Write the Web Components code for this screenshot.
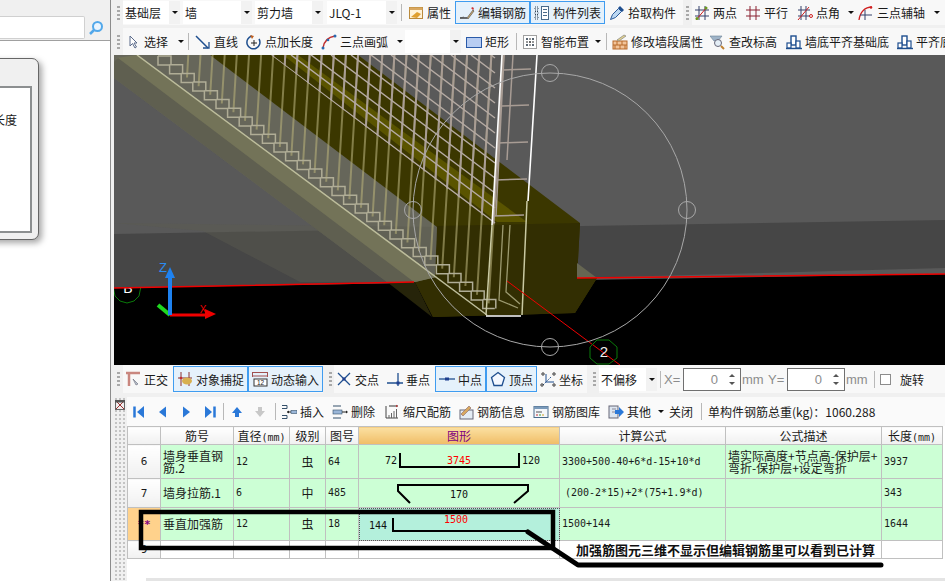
<!DOCTYPE html>
<html lang="zh">
<head>
<meta charset="utf-8">
<title>钢筋编辑</title>
<style>
  html, body { margin: 0; padding: 0; background: #f0f0f0; }
  body { width: 945px; height: 581px; overflow: hidden; font: 12px "Noto Sans CJK SC", "Liberation Sans", sans-serif; color: #1a1a1a; }
</style>
</head>
<body>
<cad-app>
  <side-panel slot="side"></side-panel>

  <tool-bar h="25" mb="3">
    <tool-grip w="9"></tool-grip>
    <tool-combo w="57" mr="3">基础层</tool-combo>
    <tool-combo w="69" mr="3">墙</tool-combo>
    <tool-combo w="68" mr="4">剪力墙</tool-combo>
    <tool-combo w="70">JLQ-1</tool-combo>
    <tool-sep w="9"></tool-sep>
    <tool-btn w="49" pl="2" icon="props">属性</tool-btn>
    <tool-btn w="75" pl="4" icon="editbar" active>编辑钢筋</tool-btn>
    <tool-btn w="75" pl="4" icon="list" active>构件列表</tool-btn>
    <tool-btn w="78" pl="4" icon="pick">拾取构件</tool-btn>
    <tool-grip w="9"></tool-grip>
    <tool-btn w="51" pl="2" icon="twopt">两点</tool-btn>
    <tool-btn w="52" pl="2" icon="parallel">平行</tool-btn>
    <tool-btn w="60" pl="2" icon="angle" arrow am="5">点角</tool-btn>
    <tool-btn w="90" pl="3" icon="arcaxis" arrow am="6">三点辅轴</tool-btn>
  </tool-bar>

  <tool-bar h="27">
    <tool-grip w="9"></tool-grip>
    <tool-btn w="61" pl="2" icon="cursor" arrow am="7">选择</tool-btn>
    <tool-sep w="8"></tool-sep>
    <tool-btn w="52" pl="3" icon="line">直线</tool-btn>
    <tool-btn w="75" pl="2" icon="addlen">点加长度</tool-btn>
    <tool-btn w="85" pl="2" icon="arc" arrow am="6">三点画弧</tool-btn>
    <tool-combo w="56" ml="1"></tool-combo>
    <tool-btn w="51" pl="5" icon="rect">矩形</tool-btn>
    <tool-sep w="8"></tool-sep>
    <tool-btn w="82" pl="2" icon="smart" arrow am="3">智能布置</tool-btn>
    <tool-sep w="8"></tool-sep>
    <tool-btn w="97" pl="2" icon="wall">修改墙段属性</tool-btn>
    <tool-btn w="76" pl="3" icon="level">查改标高</tool-btn>
    <tool-btn w="111" pl="3" icon="align">墙底平齐基础底</tool-btn>
    <tool-btn w="60" pl="3" icon="align">平齐底部</tool-btn>
  </tool-bar>

  <scene-view></scene-view>

  <tool-bar h="28" mb="4">
    <tool-grip w="9"></tool-grip>
    <tool-btn w="50" pl="2" icon="ortho">正交</tool-btn>
    <tool-btn w="75" pl="4" icon="snap" active>对象捕捉</tool-btn>
    <tool-btn w="75" pl="4" icon="dyn" active>动态输入</tool-btn>
    <tool-grip w="11" pl="6"></tool-grip>
    <tool-btn w="51" pl="2" icon="cross">交点</tool-btn>
    <tool-btn w="50" pl="2" icon="perp">垂点</tool-btn>
    <tool-btn w="51" pl="4" icon="mid" active>中点</tool-btn>
    <tool-btn w="51" pl="4" icon="vertex" active>顶点</tool-btn>
    <tool-btn w="50" pl="3" icon="coord">坐标</tool-btn>
    <tool-grip w="12" pl="6"></tool-grip>
    <tool-combo w="58">不偏移</tool-combo>
    <tool-sep w="7"></tool-sep>
    <coord-field label="X=" value="0"></coord-field>
    <coord-field label="Y=" value="0"></coord-field>
    <tool-sep w="4"></tool-sep>
    <check-field>旋转</check-field>
  </tool-bar>

  <grid-panel>
    <tool-bar h="29" slot="bar" flat>
      <tool-btn w="24" pl="4" icon="first"></tool-btn>
      <tool-btn w="24" pl="3" icon="prev"></tool-btn>
      <tool-btn w="23" pl="3" icon="next"></tool-btn>
      <tool-btn w="21" pl="4" icon="last"></tool-btn>
      <tool-sep w="8"></tool-sep>
      <tool-btn w="21" pl="2" icon="up"></tool-btn>
      <tool-btn w="23" pl="4" icon="down"></tool-btn>
      <tool-sep w="8"></tool-sep>
      <tool-btn w="50" pl="2" icon="insert">插入</tool-btn>
      <tool-btn w="52" pl="3" icon="remove">删除</tool-btn>
      <tool-btn w="75" pl="3" icon="scale">缩尺配筋</tool-btn>
      <tool-btn w="75" pl="2" icon="info">钢筋信息</tool-btn>
      <tool-btn w="75" pl="2" icon="lib">钢筋图库</tool-btn>
      <tool-btn w="61" pl="2" icon="other" arrow am="4">其他</tool-btn>
      <tool-btn w="30" pl="2">关闭</tool-btn>
      <tool-sep w="8"></tool-sep>
      <tool-btn w="200" pl="3">单构件钢筋总重(kg)：1060.288</tool-btn>
    </tool-bar>
    <rebar-grid></rebar-grid>
  </grid-panel>

  <note-callout slot="over">加强筋图元三维不显示但编辑钢筋里可以看到已计算</note-callout>
</cad-app>

<script>
// 16x16 toolbar icons
const ICONS = {
  props: '<rect x="1.5" y="2.5" width="13" height="11" fill="#fff3d8" stroke="#b98a3c"/><rect x="1.5" y="2.5" width="13" height="2.5" fill="#d9a860"/><path d="M3 12l6-5 4 2-4 4z" fill="#e0a030"/>',
  editbar: '<path d="M1 13h7" stroke="#333" stroke-width="1.4"/><path d="M1 13l4-1M8 13l6-8 1 1-6 8z" fill="#d9b26a" stroke="#555" stroke-width=".7"/><path d="M12 3l2-1 1 2-1 1z" fill="#c33"/>',
  list: '<rect x="1" y="2" width="3" height="3" fill="none" stroke="#345" stroke-dasharray="1 1"/><rect x="1" y="6.5" width="3" height="3" fill="none" stroke="#345" stroke-dasharray="1 1"/><rect x="1" y="11" width="3" height="3" fill="none" stroke="#345" stroke-dasharray="1 1"/><rect x="7.5" y="1.5" width="7" height="13" fill="#fff" stroke="#4a6a8a"/><path d="M9 4.5h4M9 7.5h4M9 10.5h4" stroke="#4a6a8a"/>',
  pick: '<path d="M1.5 14.5l2-5 6-6 3 3-6 6z" fill="#bcd8f2" stroke="#2a5a9a"/><path d="M9 3l2-2 4 4-2 2z" fill="#1f4f8f"/>',
  twopt: '<path d="M1 5h14M1 11h14M5 1v14M11 1v14" stroke="#35406a"/><path d="M2 15L13 2" stroke="#d02020"/><circle cx="3" cy="13.500" r="1.500" fill="#6a9a20"/><circle cx="12" cy="3" r="1.500" fill="#6a9a20"/>',
  parallel: '<path d="M1 5h14M1 11h14M5 1v14M11 1v14" stroke="#8a2030"/>',
  angle: '<path d="M1 5h12M1 11h12M4 1v14M9 1v14" stroke="#35406a"/><path d="M1 15L12 2" stroke="#d02020"/><circle cx="14" cy="11" r="1.500" fill="none" stroke="#d02020"/>',
  arcaxis: '<path d="M1 15C2 7 7 2 14 2" fill="none" stroke="#d02020" stroke-width="1.300"/><path d="M2 10h12M7 5v10" stroke="#35406a"/><circle cx="13" cy="2.500" r="1.300" fill="#d02020"/>',
  cursor: '<path d="M5 2v10l2.500-2.500L10 14l1.500-1-2.500-4h3z" fill="#fff" stroke="#5a6a8a"/>',
  line: '<path d="M1 2l12 12" stroke="#1f4f8f" stroke-width="1.500"/><path d="M8 14h6V8" fill="none" stroke="#1f4f8f" stroke-width="1.300"/>',
  addlen: '<path d="M6 2a6.500 6.500 0 1 0 7 3" fill="none" stroke="#1f4f8f" stroke-width="1.500"/><path d="M4 1l4 1-2 3z" fill="#c06020"/><path d="M8 6v6M5 9h6" stroke="#222"/>',
  arc: '<path d="M2 14C3 7 7 3 14 2" fill="none" stroke="#c03030" stroke-width="1.500"/><circle cx="2" cy="14" r="1.500" fill="#2a6ab0"/><circle cx="7" cy="6" r="1.300" fill="#2a6ab0"/><circle cx="14" cy="2" r="1.500" fill="#2a6ab0"/>',
  rect: '<rect x=".5" y="3.500" width="15" height="10" fill="#b8cdf2" stroke="#2a5aa8"/>',
  smart: '<rect x="1.500" y="1.500" width="13" height="13" fill="#fff" stroke="#444" stroke-dasharray="1 1"/><path d="M8 4v8M4 8h8" stroke="#333" stroke-dasharray="2 1"/><circle cx="5" cy="5" r="1" fill="#234"/><circle cx="11" cy="11" r="1" fill="#234"/><circle cx="11" cy="5" r="1" fill="#234"/><circle cx="5" cy="11" r="1" fill="#234"/>',
  wall: '<rect x="1" y="7" width="14" height="8" fill="#f2c49a" stroke="#b86a2a"/><path d="M1 11h14M5 7v4M10 7v4M3 11v4M8 11v4M13 11v4" stroke="#b86a2a"/><path d="M5 6l7-5 2 1-7 5z" fill="#e0d090" stroke="#777" stroke-width=".6"/>',
  level: '<path d="M0 2h12l-4 5H4z" fill="#9fb4c8" stroke="#6a8095" stroke-width=".6"/><circle cx="8" cy="9" r="3.500" fill="#e4eef6" stroke="#667"/><path d="M11 12l3 3" stroke="#c08030" stroke-width="2"/>',
  align: '<rect x="5" y="2" width="5" height="9" fill="#fff" stroke="#1f4f8f" stroke-width="1.400"/><rect x="1" y="9" width="4" height="5" fill="#fff" stroke="#1f4f8f" stroke-width="1.200"/><rect x="10" y="7" width="4" height="7" fill="#fff" stroke="#1f4f8f" stroke-width="1.200"/><path d="M0 14.500h16" stroke="#1f4f8f" stroke-width="1.400"/>',
  ortho: '<path d="M1 2h14M4 2v13" stroke="#c9867e" stroke-width="2.500"/><path d="M8 8l5 5-2 1z" fill="#bcc6d0" stroke="#667" stroke-width=".6"/>',
  snap: '<path d="M4 1v14M12 1v14M1 7h14" stroke="#8a3030"/><ellipse cx="10" cy="10" rx="5" ry="3.500" fill="#d8b050"/><circle cx="4" cy="7" r="1.300" fill="#c03030"/>',
  dyn: '<path d="M.5 1.500h15M.5 5h15M.5 1v5M15.500 1v5" stroke="#a05050"/><rect x="2" y="8" width="13" height="7" fill="#fff" stroke="#333"/><text x="8.500" y="14" font-size="6.500" text-anchor="middle" fill="#222" font-family="Liberation Sans">12</text>',
  cross: '<path d="M2 2l12 12M14 2L2 14" stroke="#1f4f8f" stroke-width="1.300"/><rect x="6.500" y="6.500" width="3" height="3" fill="#1f3f8f"/>',
  perp: '<path d="M0 12h16M11 2v13" stroke="#1f4f8f" stroke-width="1.300"/><rect x="9.500" y="10.500" width="3" height="3" fill="#1f3f8f"/>',
  mid: '<path d="M0 8h16" stroke="#1f4f8f" stroke-width="1.300"/><rect x="6" y="6.500" width="4" height="3" fill="#1f3f8f"/>',
  vertex: '<path d="M8 1.500l6.500 5-2.500 8H4l-2.500-8z" fill="#f4f8ff" stroke="#1f4f8f" stroke-width="1.300"/>',
  coord: '<path d="M6 3v8h8" fill="none" stroke="#1f4f8f"/><path d="M3 14l8-8" stroke="#1f4f8f" stroke-dasharray="1.500 1"/><circle cx="3" cy="3" r="1.200" fill="none" stroke="#333"/><circle cx="14" cy="3" r="1.200" fill="none" stroke="#333"/><circle cx="2" cy="14" r="1.200" fill="none" stroke="#333"/><circle cx="14" cy="14" r="1.200" fill="none" stroke="#333"/>',
  first: '<path d="M3.500 2.500v11" stroke="#2a78d8" stroke-width="2.500"/><path d="M13 2v12L6 8z" fill="#2a78d8"/>',
  prev: '<path d="M12 2.500v11L5 8z" fill="#2a78d8"/>',
  next: '<path d="M5 2.500v11L12 8z" fill="#2a78d8"/>',
  last: '<path d="M12.500 2.500v11" stroke="#2a78d8" stroke-width="2.500"/><path d="M3 2v12l7-6z" fill="#2a78d8"/>',
  up: '<path d="M8 3l5 6h-3v4H6V9H3z" fill="#2a78d8"/>',
  down: '<path d="M8 13l5-6h-3V3H6v4H3z" fill="#c8c8c8"/>',
  insert: '<path d="M1 1.500h5M6 1.500v3M1 4.500h5M1 11.500h5M6 11.500v3M1 14.500h5" fill="none" stroke="#35506a"/><path d="M6 8h4" stroke="#222"/><path d="M6 8l2-1.500v3z" fill="#222"/><rect x="10" y="6.500" width="6" height="3" fill="#9ab6d8" stroke="#35506a" stroke-width=".6"/>',
  remove: '<path d="M1 2h8M1 14h8" stroke="#35506a"/><rect x="1" y="6" width="9" height="4" fill="#9ab6d8" stroke="#35506a" stroke-width=".6"/><path d="M10 8h5" stroke="#222"/><path d="M16 8l-2-1.500v3z" fill="#222"/>',
  scale: '<path d="M2 2v12M2 14h12" stroke="#444"/><path d="M5 11v3M7.500 9v5M10 7v7M12.500 5v9" stroke="#666"/><path d="M5 2h9" stroke="#333"/><path d="M14 2l-2-1.200v2.400z" fill="#c03030"/>',
  info: '<rect x="2" y="6" width="13" height="9" fill="#e4ecf4" stroke="#667"/><path d="M3 10l8-8 2 2-8 8z" fill="#d8a860" stroke="#866" stroke-width=".6"/>',
  lib: '<rect x="1" y="2.500" width="14" height="11" fill="#f4f6fa" stroke="#4a6a8a"/><rect x="1" y="2.500" width="14" height="2.500" fill="#7a9aba"/><path d="M3 8h6" stroke="#555"/><path d="M3 11h2" stroke="#c03030"/><path d="M6 11h2" stroke="#30a030"/><path d="M9 11h2" stroke="#d0a020"/>',
  other: '<rect x="1" y="2" width="9" height="12" fill="#dde6f0" stroke="#667"/><path d="M4 5h4M4 8h4" stroke="#889"/><path d="M7 6h4V3l5 5-5 5v-3H7z" fill="#2a78d8"/>'
};

class CadApp extends HTMLElement {
  constructor() {
    super();
    this.attachShadow({ mode: 'open' }).innerHTML = `
      <style>
        :host { display: flex; position: relative; width: 945px; height: 581px; overflow: hidden; }
        .main { flex: 1; min-width: 0; display: flex; flex-direction: column; padding-left: 3px; background: #f0f0f0; }
      </style>
      <slot name="side"></slot>
      <div class="main"><slot></slot></div>
      <slot name="over"></slot>`;
  }
}

class SidePanel extends HTMLElement {
  constructor() {
    super();
    this.attachShadow({ mode: 'open' }).innerHTML = `
      <style>
        :host { display: flex; flex-direction: column; width: 111px; height: 581px; box-sizing: border-box; border-right: 1px solid #8c8c8c; background: #fff; overflow: hidden; flex: none; }
        .top { height: 41px; flex: none; box-sizing: border-box; background: #f0f0f0; border-bottom: 1px solid #a0a0a0; padding-top: 16px; display: flex; }
        .search { width: 85px; height: 23px; background: #fff; border: 1px solid #d0d0d0; border-left: 0; border-radius: 0 2px 2px 0; box-sizing: border-box; }
        .go { width: 20px; height: 23px; display: flex; align-items: center; justify-content: center; margin-left: 1px; }
        .dlg { margin: 17px 0 0 -40px; width: 79px; height: 182px; box-sizing: border-box; background: #f0f0f0; border: 1px solid #666; border-radius: 7px; box-shadow: 3px 3px 6px rgba(0,0,0,.35); padding: 27px 6px 6px 4px; }
        .inner { height: 100%; box-sizing: border-box; background: #fff; border: 2px solid #8c8f90; padding: 24px 0 0 26px; white-space: nowrap; line-height: 16px; }
      </style>
      <div class="top">
        <div class="search"></div>
        <div class="go"><svg width="16" height="16" viewBox="0 0 16 16"><circle cx="9.500" cy="6.500" r="4.500" fill="#eaf5ff" stroke="#52a8ea" stroke-width="2"/><path d="M6 10l-4 4" stroke="#52a8ea" stroke-width="2.500"/></svg></div>
      </div>
      <div class="dlg"><div class="inner">长度</div></div>`;
  }
}

class ToolBar extends HTMLElement {
  constructor() {
    super();
    this.attachShadow({ mode: 'open' });
  }
  connectedCallback() {
    const flat = this.hasAttribute('flat');
    this.shadowRoot.innerHTML = `
      <style>
        :host { display: flex; align-items: stretch; flex: none; height: ${this.getAttribute('h')}px; margin-bottom: ${this.getAttribute('mb') || 0}px; background: ${flat ? '#fafafa' : '#f8f8f8'}; white-space: nowrap; overflow: hidden; }
      </style>
      <slot></slot>`;
  }
}

class ToolBtn extends HTMLElement {
  constructor() {
    super();
    this.attachShadow({ mode: 'open' });
  }
  connectedCallback() {
    const icon = this.getAttribute('icon');
    const svg = icon ? `<svg width="16" height="16" viewBox="0 0 16 16">${ICONS[icon]}</svg>` : '';
    const arrow = this.hasAttribute('arrow') ? `<i style="margin-left:${this.getAttribute('am') || 4}px"></i>` : '';
    this.shadowRoot.innerHTML = `
      <style>
        :host { display: flex; align-items: center; gap: 3px; flex: none; box-sizing: border-box; width: ${this.getAttribute('w')}px; padding-left: ${this.getAttribute('pl') || 0}px; overflow: visible; }
        :host([active]) { margin: 1px 0; background: #e5f1fb; outline: 1px solid #3f9cf0; outline-offset: -1px; }
        svg { flex: none; }
        i { width: 0; height: 0; border: 3px solid transparent; border-top: 3px solid #111; border-bottom: 0; flex: none; }
      </style>
      ${svg}<span><slot></slot></span>${arrow}`;
  }
}

class ToolGrip extends HTMLElement {
  constructor() {
    super();
    this.attachShadow({ mode: 'open' });
  }
  connectedCallback() {
    this.shadowRoot.innerHTML = `
      <style>
        :host { display: flex; align-items: center; flex: none; box-sizing: border-box; width: ${this.getAttribute('w')}px; padding-left: ${this.getAttribute('pl') || 3}px; background: #f0f0f0; }
        b { display: block; width: 3px; height: 16px; background: radial-gradient(circle, #a8a8a8 55%, transparent 60%) 0 0 / 3px 4px; }
      </style>
      <b></b>`;
  }
}

class ToolSep extends HTMLElement {
  constructor() {
    super();
    this.attachShadow({ mode: 'open' });
  }
  connectedCallback() {
    this.shadowRoot.innerHTML = `
      <style>
        :host { display: flex; align-items: center; justify-content: center; flex: none; width: ${this.getAttribute('w')}px; }
        b { display: block; width: 1px; height: 17px; background: #b8b8b8; }
      </style>
      <b></b>`;
  }
}

class ToolCombo extends HTMLElement {
  constructor() {
    super();
    this.attachShadow({ mode: 'open' });
  }
  connectedCallback() {
    const g = (n) => this.getAttribute(n) || 0;
    this.shadowRoot.innerHTML = `
      <style>
        :host { display: flex; align-items: center; flex: none; box-sizing: border-box; height: 23px; align-self: center; width: ${g('w')}px; margin: 0 ${g('mr')}px 0 ${g('ml')}px; background: #fff; padding-left: 2px; }
        span { flex: 1; overflow: hidden; white-space: nowrap; }
        em { width: 11px; height: 100%; background: #f2f2f2; display: flex; align-items: center; justify-content: center; flex: none; }
        i { width: 0; height: 0; border: 3px solid transparent; border-top: 3px solid #111; border-bottom: 0; }
      </style>
      <span><slot></slot></span><em><i></i></em>`;
  }
}

class CoordField extends HTMLElement {
  constructor() {
    super();
    this.attachShadow({ mode: 'open' });
  }
  connectedCallback() {
    this.shadowRoot.innerHTML = `
      <style>
        :host { display: flex; align-items: center; flex: none; font: 13px "Liberation Sans", sans-serif; color: #8c8c8c; }
        .l { width: 19px; }
        .box { width: 58px; height: 23px; box-sizing: border-box; border: 1px solid #707070; background: #fff; display: flex; align-items: center; justify-content: flex-end; }
        .v { font-size: 13px; margin-right: 5px; }
        .s { width: 17px; height: 100%; display: flex; flex-direction: column; align-items: center; justify-content: center; gap: 5px; }
        .s i { width: 0; height: 0; border: 3px solid transparent; }
        .s i:first-child { border-bottom: 3px solid #555; border-top: 0; }
        .s i:last-child { border-top: 3px solid #555; border-bottom: 0; }
        .u { width: 27px; padding-left: 1px; box-sizing: border-box; letter-spacing: -.2px; }
      </style>
      <span class="l">${this.getAttribute('label')}</span>
      <div class="box"><span class="v">${this.getAttribute('value')}</span><div class="s"><i></i><i></i></div></div>
      <span class="u">mm</span>`;
  }
}

class CheckField extends HTMLElement {
  constructor() {
    super();
    this.attachShadow({ mode: 'open' }).innerHTML = `
      <style>
        :host { display: flex; align-items: center; flex: none; padding-left: 4px; }
        b { width: 11px; height: 11px; border: 1px solid #8c8c8c; box-sizing: border-box; margin-right: 9px; background: #fff; }
      </style>
      <b></b><span><slot></slot></span>`;
  }
}

class SceneView extends HTMLElement {
  constructor() {
    super();
    this.attachShadow({ mode: 'open' });
  }
  connectedCallback() {
    // bars, mesh and stirrups of the wall are regular, so build them in a loop
    let bars = '';
    for (let xb = 187; xb < 492; xb += 11.6) {
      const yb = 55 + (xb - 157) * 0.749;
      const xt = xb + (yb - 55) * 0.06;
      bars += `M${xb.toFixed(1)} ${yb.toFixed(1)}L${xt.toFixed(1)} 55`;
    }
    let mesh = '';
    for (let xs = 251; xs < 495; xs += 20) {
      const xe = 495;
      mesh += `M${xs} 55L${xe} ${(55 + (xe - xs) * 0.75).toFixed(1)}`;
    }
    let stairs = '';
    for (let i = 0; i < 29; i++) {
      const x = 158 + i * 11.6;
      const y = 56 + i * 8.7;
      stairs += `M${x.toFixed(1)} ${y.toFixed(1)}h13v9`;
      stairs += `M${(x + 12).toFixed(1)} ${(y + 9).toFixed(1)}h-12v-9`;
    }
    const rungs = [[503, 70, 531], [502, 106, 529], [498, 143, 528], [495, 180, 527], [493, 216, 524]]
      .map(([x, y, e]) => `M${x} ${y}L${e} ${y - 1}`).join('');
    this.shadowRoot.innerHTML = `
      <style>
        :host { display: block; flex: none; height: 310px; background: #000; overflow: hidden; }
        svg { display: block; }
        text { font-family: "Liberation Sans", sans-serif; }
      </style>
      <svg width="831" height="310" viewBox="114 55 831 310">
        <defs>
          <clipPath id="upper"><polygon points="271,55 540,55 540,259"/></clipPath>
        </defs>
        <rect x="114" y="55" width="831" height="310" fill="#000"/>
        <polygon points="115,296 120,301 127,303 134,301 139,296 141,286 113,286" fill="none" stroke="#0a7a0a"/>
        <text x="128" y="293" fill="#fff" font-size="14" text-anchor="middle">B</text>
        <polygon points="114,55 945,55 945,274 114,288" fill="#595959"/>
        <polygon points="114,234 945,220 945,268 577,278 414,282 114,288" fill="#464646"/>

        <polygon points="358,55 580,223 577,278 597,278 575,313 433,317 415,282 210,55" fill="#3b3700"/>
        <polygon points="436,226 580,223 577,278 597,278 575,313 433,317 415,282" fill="#322e02"/>
        <polygon points="283,55 298,55 527,222 497,222" fill="#5a5400"/>
        <polygon points="387,282 415,282 432,317" fill="#26240a"/>
        <polygon points="577,263 597,278 577,278" fill="#666652"/>

        <polygon points="114,55 210,55 437,227 435,277 415,282 387,282 114,78" fill="#66665a"/>
        <polygon points="114,223 437,227 435,277 415,282 387,282 300,282 203,231" fill="#5a5a50" opacity=".45"/>
        <polygon points="116,58 137,55 437,277 415,282 412,282" fill="#737358"/>
        <polygon points="114,62 118,58 414,282 387,282 114,78" fill="#5f5f50"/>

        <path d="${bars}" stroke="#b4ae78" stroke-opacity=".6" stroke-width="2" fill="none"/>
        <path d="${bars}" stroke="#a89c94" stroke-width="2" fill="none" clip-path="url(#upper)"/>
        <path d="${mesh}" stroke="#b5aaa3" stroke-width="1.500" fill="none" clip-path="url(#upper)"/>
        <path d="${stairs}" stroke="#b0ad96" stroke-width="1.500" fill="none"/>
        <path d="M137 55L487 315" stroke="#bdbd9c" stroke-width="1.500"/>

        <path d="${rungs}" stroke="#a89c94" stroke-width="1.500" fill="none"/>
        <path d="M504 55L496 216M513 55L507 160" stroke="#a89c94" stroke-width="1.500" fill="none"/>
        <path d="M502 55L492 225M537 55L528 201" stroke="#fff" stroke-width="1.600" fill="none"/>
        <path d="M492 225L486 315M527 201L526 225L522 315" stroke="#c9c9a2" stroke-width="1.500" fill="none"/>
        <path d="M503 225L499 300L518 308M510 225L506 292L520 304" stroke="#9c9a70" stroke-width="1.300" fill="none"/>
        <path d="M486 316H521" stroke="#fff" stroke-width="1.500"/>

        <path d="M114 288L414 282M577 278L945 274" stroke="#f00000" stroke-width="1.500"/>
        <path d="M507 281L620 365" stroke="#f00000"/>

        <g fill="none" stroke="#a8a8a8">
          <circle cx="550" cy="210" r="137"/>
          <circle cx="550" cy="73" r="8.500"/>
          <circle cx="550" cy="347" r="8.500"/>
          <circle cx="687" cy="210" r="8.500"/>
          <circle cx="413" cy="210" r="8.500"/>
        </g>
        <polygon points="597,340 609,340 617,347 617,358 609,364 597,364 590,358 590,347" fill="none" stroke="#0a7a0a"/>
        <text x="604" y="357" fill="#eee" font-size="15" text-anchor="middle">2</text>

        <path d="M158 305L170 315" stroke="#1fd81f" stroke-width="4"/>
        <path d="M170 315H208" stroke="#f00000" stroke-width="3"/>
        <polygon points="205,309 216,314 205,319" fill="#f00000"/>
        <path d="M170 315V272" stroke="#1e82f0" stroke-width="4"/>
        <polygon points="170,267 175,278 165,278" fill="#1e82f0"/>
        <text x="163" y="272" fill="#2b8cf0" font-size="13" text-anchor="middle">Z</text>
        <text x="203" y="313" fill="#f00000" font-size="10" text-anchor="middle">X</text>
      </svg>`;
  }
}

class GridPanel extends HTMLElement {
  constructor() {
    super();
    this.attachShadow({ mode: 'open' }).innerHTML = `
      <style>
        :host { display: flex; flex: 1; min-height: 0; background: #fff; }
        .gutter { width: 13px; flex: none; position: relative; background: #f0f0f0 radial-gradient(circle, #c4c4c4 45%, transparent 50%) 0 0 / 4px 4px; }
        .close { position: absolute; left: 1px; top: 3px; width: 10px; height: 10px; display: block; }
        .body { flex: 1; min-width: 0; display: flex; flex-direction: column; }
        .bar { height: 3px; flex: none; background: #e4e4e4; margin: auto 0 0 19px; }
      </style>
      <div class="gutter">
        <svg class="close" viewBox="0 0 10 10"><rect x=".5" y=".5" width="9" height="9" fill="#eee" stroke="#666"/><path d="M1 1l8 8M9 1L1 9" stroke="#a03030"/><rect x="0" y="0" width="10" height="2.500" fill="#555"/></svg>
      </div>
      <div class="body"><slot name="bar"></slot><slot></slot><div class="bar"></div></div>`;
  }
}

class RebarGrid extends HTMLElement {
  constructor() {
    super();
    this.attachShadow({ mode: 'open' }).innerHTML = `
      <style>
        :host { display: block; flex: none; }
        table { border-collapse: collapse; table-layout: fixed; width: 815px; }
        td, th { border: 1px solid #c0c0c0; padding: 0 0 0 2px; font-weight: 400; overflow: hidden; box-sizing: border-box; }
        th { height: 18px; padding: 0; text-align: center; background: linear-gradient(#fff, #f0f0f0); line-height: 14px; }
        th small { font: 10px "DejaVu Sans Mono", monospace; }
        th.on { background: linear-gradient(#fbe0a2, #f0bd66); color: #800080; }
        tbody th { font: 11px "DejaVu Sans Mono", monospace; }
        th.sel { background: #ffd28c; color: #800080; font-weight: 700; }
        td { background: #ccffd5; line-height: 12px; vertical-align: middle; }
        td.n { font: 10px/12px "DejaVu Sans Mono", monospace; }
        td.c { text-align: center; padding: 0; }
        td.s { padding: 0; }
        td.s svg { display: block; }
        td.cur { background: #b4f0dc; outline: 1px dotted #555; outline-offset: -1px; }
        tr.e td { background: #fff; }
        .bl { border-left: 1px solid #111; }
        svg text { font: 10px "DejaVu Sans Mono", monospace; fill: #111; text-anchor: middle; }
        svg text.r { fill: #f00; }
        svg path { fill: none; stroke: #000; stroke-width: 2; }
      </style>
      <table>
        <colgroup><col style="width:33px"><col style="width:73px"><col style="width:56px"><col style="width:36px"><col style="width:33px"><col style="width:201px"><col style="width:166px"><col style="width:156px"><col style="width:61px"></colgroup>
        <thead><tr>
          <th></th><th>筋号</th><th>直径<small>(mm)</small></th><th>级别</th><th>图号</th><th class="on">图形</th><th>计算公式</th><th>公式描述</th><th>长度<small>(mm)</small></th>
        </tr></thead>
        <tbody>
          <tr style="height:33px">
            <th>6</th><td>墙身垂直钢筋.2</td><td class="n bl">12</td><td class="c">虫</td><td class="n">64</td>
            <td class="s"><svg width="200" height="33"><text x="32" y="19">72</text><path d="M41 8V22H160V8"/><text class="r" x="100" y="19">3745</text><text x="172" y="19">120</text></svg></td>
            <td class="n">3300+500-40+6*d-15+10*d</td><td>墙实际高度+节点高-保护层+<br>弯折-保护层+设定弯折</td><td class="n">3937</td>
          </tr>
          <tr style="height:28px">
            <th>7</th><td>墙身拉筋.1</td><td class="n bl">6</td><td class="c">中</td><td class="n">485</td>
            <td class="s"><svg width="200" height="28"><path d="M51 24L39 12V6H169V12L155 24"/><text x="100" y="19">170</text></svg></td>
            <td class="n" style="padding-left:5px">(200-2*15)+2*(75+1.9*d)</td><td></td><td class="n">343</td>
          </tr>
          <tr style="height:33px">
            <th class="sel">**</th><td>垂直加强筋</td><td class="n bl">12</td><td class="c">虫</td><td class="n">18</td>
            <td class="s cur"><svg width="200" height="32"><text x="19" y="21">144</text><path d="M34 10V23H170"/><text class="r" x="97" y="15">1500</text></svg></td>
            <td class="n">1500+144</td><td></td><td class="n">1644</td>
          </tr>
          <tr class="e" style="height:18px">
            <th>9</th><td></td><td class="bl"></td><td></td><td></td><td></td><td></td><td></td><td></td>
          </tr>
        </tbody>
      </table>`;
  }
}

class NoteCallout extends HTMLElement {
  constructor() {
    super();
    // hand-drawn mark on top of the grid, so it sits over the page on purpose
    this.attachShadow({ mode: 'open' }).innerHTML = `
      <style>
        :host { position: absolute; left: 0; top: 0; width: 945px; height: 581px; pointer-events: none; display: block; }
        svg { position: absolute; left: 0; top: 0; }
        div { position: absolute; left: 576px; top: 541px; font-size: 13px; line-height: 18px; font-weight: 700; color: #111; white-space: nowrap; }
      </style>
      <svg width="945" height="581">
        <path d="M141 512H553V548H141Z" fill="none" stroke="#000" stroke-width="4.500"/>
        <path d="M528 532L578 565H881" fill="none" stroke="#000" stroke-width="5" stroke-linecap="round" stroke-linejoin="round"/>
      </svg>
      <div><slot></slot></div>`;
  }
}

customElements.define('cad-app', CadApp);
customElements.define('side-panel', SidePanel);
customElements.define('tool-bar', ToolBar);
customElements.define('tool-btn', ToolBtn);
customElements.define('tool-grip', ToolGrip);
customElements.define('tool-sep', ToolSep);
customElements.define('tool-combo', ToolCombo);
customElements.define('coord-field', CoordField);
customElements.define('check-field', CheckField);
customElements.define('scene-view', SceneView);
customElements.define('grid-panel', GridPanel);
customElements.define('rebar-grid', RebarGrid);
customElements.define('note-callout', NoteCallout);
</script>
</body>
</html>
